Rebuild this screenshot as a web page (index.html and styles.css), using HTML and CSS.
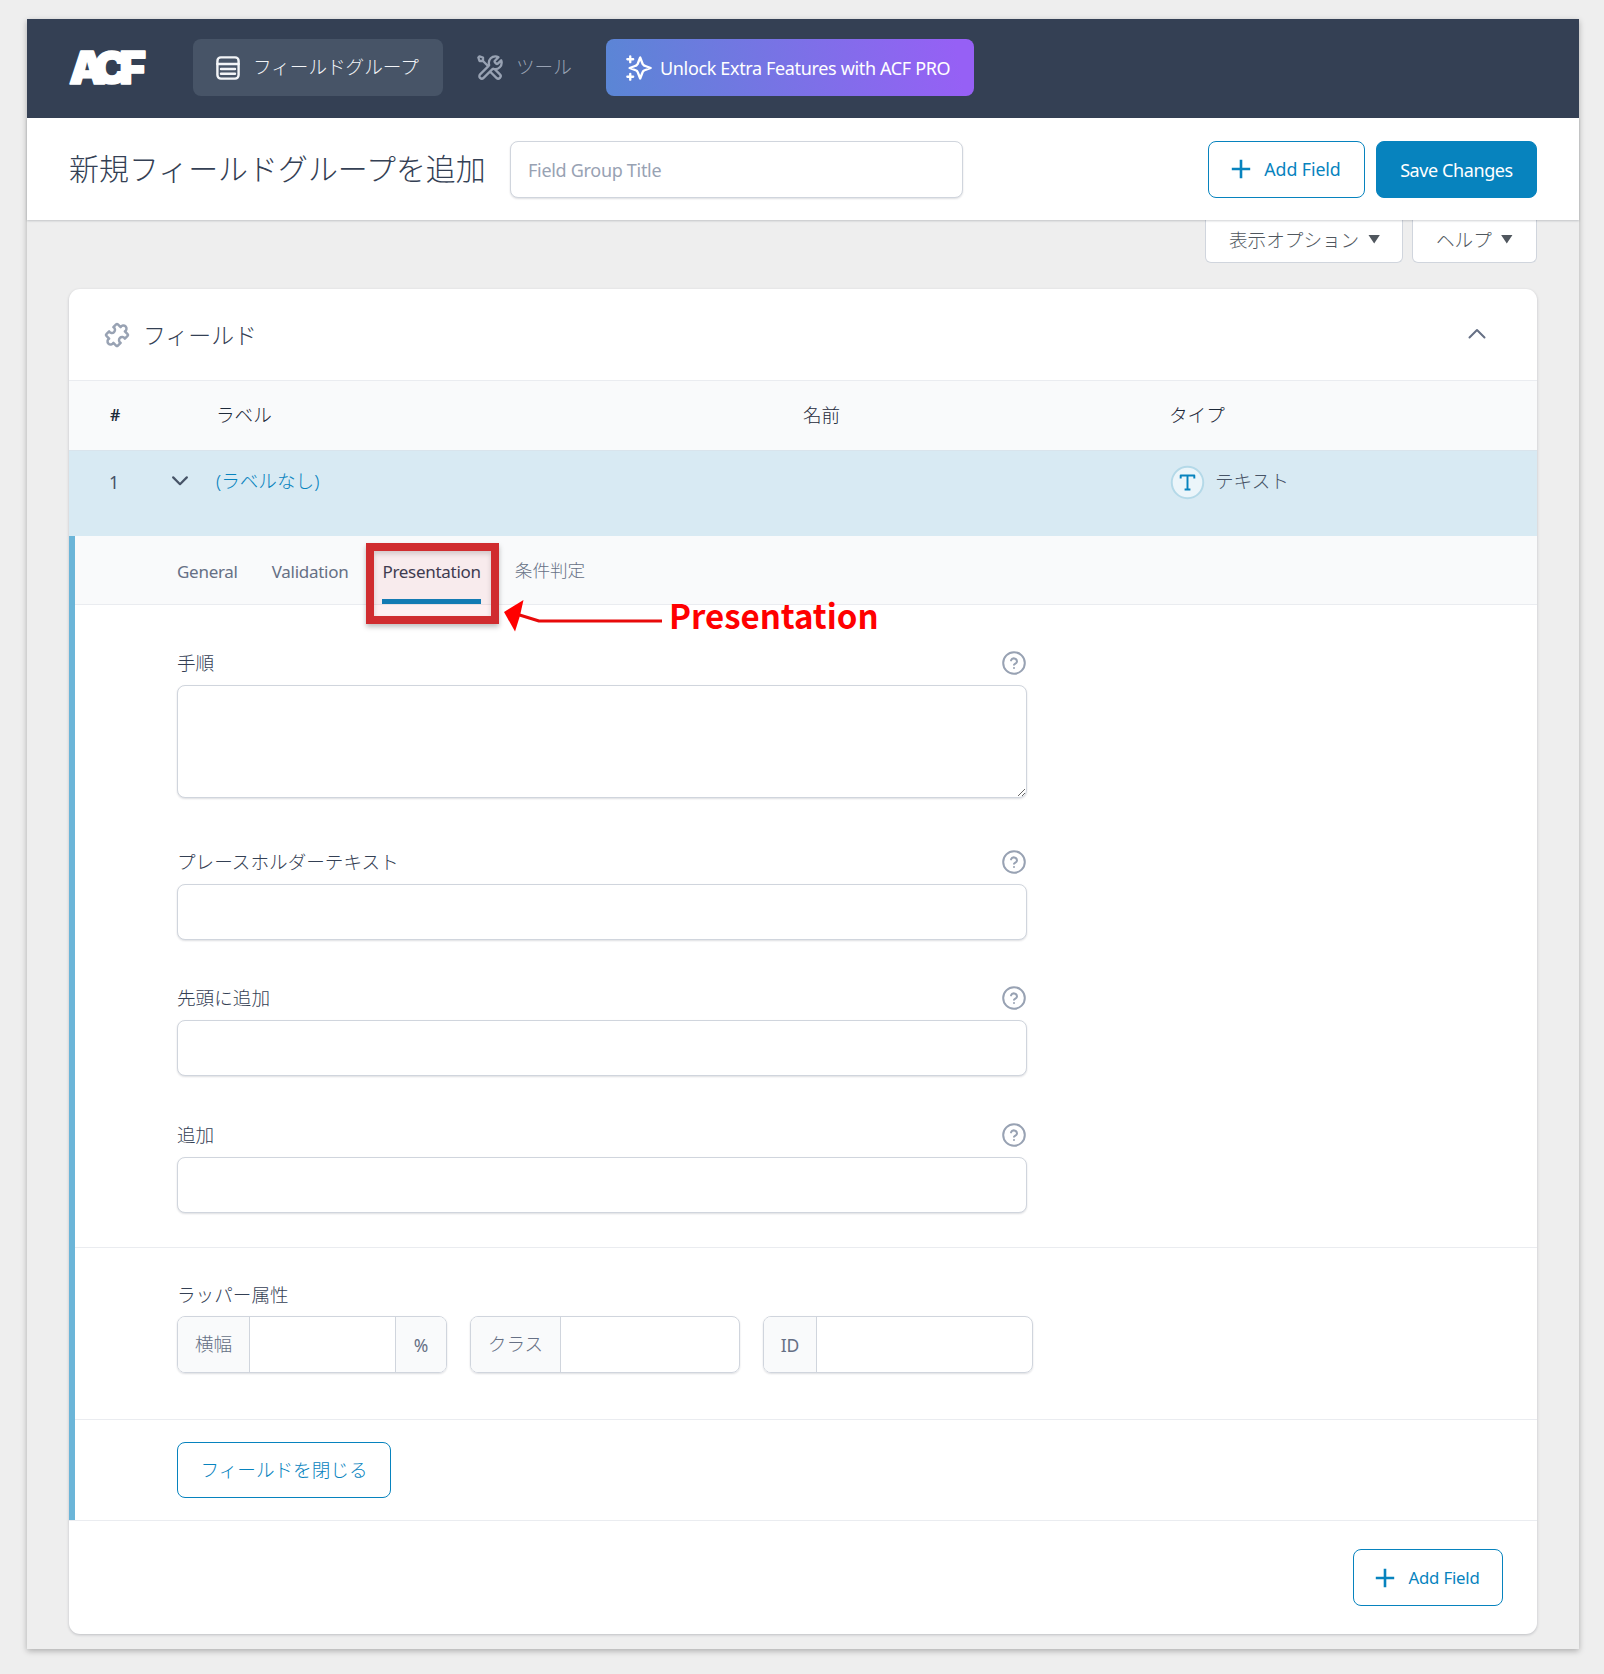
FILE: index.html
```html
<!DOCTYPE html>
<html lang="ja">
<head>
<meta charset="utf-8">
<title>新規フィールドグループを追加</title>
<link rel="stylesheet" href="styles.css">
</head>
<body>
<svg width="0" height="0" class="defs">
  <symbol id="help" viewBox="0 0 24 24"><circle cx="12" cy="12" r="10.8"/><path d="M9 9.4a3.1 3.1 0 0 1 6 1c0 2-3 2.6-3 3.4M12 16.9v.1"/></symbol>
  <symbol id="plus" viewBox="0 0 20 20"><path d="M10 .8v18.4M.8 10h18.4"/></symbol>
</svg>
<div class="frame">
  <header class="topbar">
    <svg class="logo" viewBox="0 0 90 60"><text x="5" y="45" textLength="77" lengthAdjust="spacing">ACF</text></svg>
    <nav class="nav">
      <a class="nav-item active">
        <svg class="i-list" viewBox="0 0 24 24"><rect x="1.4" y="1.4" width="21.2" height="21.2" rx="3.5"/><path d="M1.4 8h21.2M5 13h14M5 17.7h14"/></svg>
        <span>フィールドグループ</span>
      </a>
      <a class="nav-item tools">
        <svg class="i-tools" viewBox="0 0 24 24"><path d="M6 6L10.5 10.5M6 6H3L2 3L3 2L6 3V6ZM19.259 2.741L16.6314 5.36863C16.2354 5.76465 16.0373 5.96265 15.9632 6.19098C15.8979 6.39183 15.8979 6.60817 15.9632 6.80902C16.0373 7.03735 16.2354 7.23535 16.6314 7.63137L16.8686 7.86863C17.2646 8.26465 17.4627 8.46265 17.691 8.53684C17.8918 8.6021 18.1082 8.6021 18.309 8.53684C18.5373 8.46265 18.7354 8.26465 19.1314 7.86863L21.5893 5.41072C21.854 6.05488 22 6.76039 22 7.5C22 10.5376 19.5376 13 16.5 13C16.1338 13 15.7759 12.9642 15.4298 12.8959C14.9436 12.8001 14.7005 12.7521 14.5532 12.7668C14.3965 12.7824 14.3193 12.8059 14.1805 12.8802C14.0499 12.9501 13.919 13.081 13.657 13.343L6.5 20.5C5.67157 21.3284 4.32843 21.3284 3.5 20.5C2.67157 19.6716 2.67157 18.3284 3.5 17.5L10.657 10.343C10.919 10.081 11.0499 9.95005 11.1198 9.81949C11.1941 9.68068 11.2176 9.60347 11.2332 9.44681C11.2479 9.29945 11.1999 9.05638 11.1041 8.57024C11.0358 8.22406 11 7.86621 11 7.5C11 4.46243 13.4624 2 16.5 2C17.5055 2 18.448 2.26982 19.259 2.741ZM12 15L17.5 20.5C18.3284 21.3283 19.6715 21.3283 20.5 20.5C21.3284 19.6715 21.3284 18.3283 20.5 17.5L15.9753 12.9753C15.655 12.945 15.3427 12.8872 15.0408 12.8043C14.6517 12.6975 14.2249 12.7751 13.9397 13.0603L12 15Z"/></svg>
        <span>ツール</span>
      </a>
    </nav>
    <a class="pro">
      <svg class="i-stars" viewBox="0 0 24 24"><path d="M4.5 22V17M4.5 7V2M2 4.5H7M2 19.5H7M13 3L11.266 7.509C10.984 8.242 10.843 8.609 10.624 8.917C10.429 9.19 10.19 9.429 9.917 9.624C9.609 9.843 9.242 9.984 8.509 10.266L4 12L8.509 13.734C9.242 14.016 9.609 14.157 9.917 14.376C10.19 14.571 10.429 14.81 10.624 15.083C10.843 15.391 10.984 15.758 11.266 16.491L13 21L14.734 16.491C15.016 15.758 15.157 15.391 15.376 15.083C15.571 14.81 15.81 14.571 16.083 14.376C16.391 14.157 16.758 14.016 17.491 13.734L22 12L17.491 10.266C16.758 9.984 16.391 9.843 16.083 9.624C15.81 9.429 15.571 9.19 15.376 8.917C15.157 8.609 15.016 8.242 14.734 7.509Z"/></svg>
      <span>Unlock Extra Features with ACF PRO</span>
    </a>
  </header>

  <div class="titlebar">
    <h1>新規フィールドグループを追加</h1>
    <input class="title-input" type="text" placeholder="Field Group Title">
    <div class="actions">
      <button class="btn add"><svg class="i-plus"><use href="#plus"/></svg><span>Add Field</span></button>
      <button class="btn save">Save Changes</button>
    </div>
  </div>

  <div class="screen-meta">
    <div class="meta-tab options"><span>表示オプション</span><i></i></div>
    <div class="meta-tab helptab"><span>ヘルプ</span><i></i></div>
  </div>

  <main class="card">
    <div class="card-head">
      <svg class="i-puzzle" viewBox="0 0 24 24"><path transform="rotate(45 12 12)" d="M6.500 5.500H9.600a2.500 2.500 0 1 1 4.800 0H17.500a1 1 0 0 1 1 1V9.600a2.500 2.500 0 1 0 0 4.800V17.500a1 1 0 0 1-1 1H14.400a2.500 2.500 0 1 1-4.800 0H6.500a1 1 0 0 1-1-1V14.400a2.500 2.500 0 1 0 0-4.800V6.500a1 1 0 0 1 1-1z"/></svg>
      <h2>フィールド</h2>
      <svg class="i-up" viewBox="0 0 18 11"><path d="M1.5 9.5L9 2l7.500 7.500"/></svg>
    </div>
    <div class="grid thead">
      <b>#</b><span></span><span>ラベル</span><span>名前</span><span>タイプ</span>
    </div>
    <div class="grid trow">
      <span class="num">1</span>
      <svg class="i-down" viewBox="0 0 16 10"><path d="M1.200 1.400L8 8.200l6.800-6.800"/></svg>
      <a>(ラベルなし)</a>
      <span></span>
      <span class="type"><svg class="i-type" viewBox="0 0 36 36"><circle cx="18" cy="18" r="16.200"/><path d="M11 14v-3.200h14V14M18 10.800v14.400M15 25.200h6"/></svg><span>テキスト</span></span>
    </div>
    <div class="field">
      <div class="tabs">
        <a>General</a><a>Validation</a>
        <a class="current">Presentation<span class="mark"></span></a>
        <a>条件判定</a>
        <div class="callout">
          <svg viewBox="0 0 160 34"><path class="line" d="M14 14.500L35 21h123"/><path class="head" d="M0 12L19.500 0L16 15.500L11 31.500z"/></svg>
          <strong>Presentation</strong>
        </div>
      </div>
      <div class="settings">
        <div class="setting"><div class="lab"><label>手順</label><svg class="i-help"><use href="#help"/></svg></div><textarea></textarea></div>
        <div class="setting"><div class="lab"><label>プレースホルダーテキスト</label><svg class="i-help"><use href="#help"/></svg></div><input type="text"></div>
        <div class="setting"><div class="lab"><label>先頭に追加</label><svg class="i-help"><use href="#help"/></svg></div><input type="text"></div>
        <div class="setting"><div class="lab"><label>追加</label><svg class="i-help"><use href="#help"/></svg></div><input type="text"></div>
      </div>
      <div class="wrapper">
        <div class="lab"><label>ラッパー属性</label></div>
        <div class="groups">
          <div class="group"><span class="pre w1">横幅</span><span class="val"></span><span class="post">%</span></div>
          <div class="group"><span class="pre w2">クラス</span><span class="val"></span></div>
          <div class="group"><span class="pre w3">ID</span><span class="val"></span></div>
        </div>
      </div>
      <div class="close-row"><button class="btn close">フィールドを閉じる</button></div>
    </div>
    <div class="card-foot">
      <button class="btn add small"><svg class="i-plus"><use href="#plus"/></svg><span>Add Field</span></button>
    </div>
  </main>
</div>
</body>
</html>
```

FILE: styles.css
```css
* { box-sizing: border-box; }
body {
  margin: 0;
  padding: 19px 25px 25px 27px;
  height: 1674px;
  overflow: hidden;
  background: #eee;
  color: #344054;
  font: 300 18.6px/28px "Noto Sans", "Noto Sans CJK JP", sans-serif;
}
svg { flex: none; fill: none; stroke: currentColor; stroke-linecap: round; stroke-linejoin: round; }
.defs { position: absolute; }
input, textarea, button { font: inherit; color: inherit; }
.frame { height: 1630px; background: #eee; box-shadow: 0 2px 6px rgba(0,0,0,.28); }

.topbar { height: 99px; background: #344054; display: flex; align-items: flex-start; padding: 20px 0 0 37px; }
.logo { width: 90px; height: 60px; margin: 0 39px 0 0; }
.logo text { font: 900 46px Inter, sans-serif; fill: #fff; stroke: #fff; stroke-width: 1.5; }
.nav { display: flex; }
.nav-item { height: 57px; display: flex; align-items: center; border-radius: 8px; }
.nav-item.active { width: 250px; padding-left: 23px; gap: 13px; background: #475467; color: #f2f4f7; }
.nav-item.tools { width: 163px; padding-left: 33px; gap: 12px; color: #98a2b3; }
.nav-item span { margin-bottom: 1px; }
.i-list { width: 24px; height: 24px; stroke-width: 2.4; }
.i-tools { width: 28px; height: 28px; stroke-width: 2; }
.pro {
  width: 368px; height: 57px; padding-left: 19px; display: flex; align-items: center; gap: 7px;
  border-radius: 8px; background: linear-gradient(80deg, #5a86d5, #9660f5 95%);
  color: #fff; font-size: 18px; font-weight: 400; letter-spacing: -.35px; white-space: nowrap;
}
.i-stars { width: 28px; height: 28px; stroke-width: 2; }

.titlebar {
  position: relative; z-index: 1; height: 102px; padding: 0 42px; display: flex; align-items: center;
  background: #fff; box-shadow: 0 1px 2px rgba(16,24,40,.2);
}
h1 { margin: 0; width: 441px; font-size: 29.950px; font-weight: 300; line-height: 40px; white-space: nowrap; }
input, textarea {
  display: block; width: 100%; height: 57px; margin: 0; padding: 0 18px; background: #fff;
  border: 1.5px solid #d0d5dd; border-radius: 8px; box-shadow: 0 1px 2px rgba(16,24,40,.14); outline: none;
}
.title-input { width: 453px; padding: 2px 17px 0; font-size: 18px; font-weight: 400; letter-spacing: -.3px; }
.title-input::placeholder { color: #98a2b3; opacity: 1; }
.actions { margin-left: auto; display: flex; gap: 11px; }
.btn {
  height: 57px; padding: 0; display: flex; align-items: center; justify-content: center; white-space: nowrap;
  border: 1.500px solid #0783be; border-radius: 8px; background: #fff; color: #0783be;
}
.btn.add { width: 157px; gap: 13px; padding-right: 1px; font-size: 17.800px; font-weight: 400; letter-spacing: -.1px; }
.btn.save { width: 161px; padding-top: 2px; background: #0783be; color: #fff; font-size: 18px; font-weight: 400; letter-spacing: -.4px; }
.i-plus { width: 20px; height: 20px; stroke-width: 2.600; stroke-linecap: butt; }

.screen-meta { height: 69px; padding-right: 42px; display: flex; justify-content: flex-end; gap: 9px; }
.meta-tab {
  height: 43px; display: flex; align-items: center; gap: 9px; padding: 0 0 2px 23px; background: #fff;
  border: 1.500px solid #d0d5dd; border-top: 0; border-radius: 0 0 6px 6px; color: #50575e;
}
.meta-tab i { width: 12px; height: 9px; margin-bottom: 2px; background: #50575e; clip-path: polygon(0 0, 100% 0, 50% 100%); }
.options { width: 198px; }
.helptab { width: 125px; }

.card { width: 1468px; height: 1345px; margin-left: 42px; background: #fff; border-radius: 11px; box-shadow: 0 1px 3px rgba(16,24,40,.22); }
.card-head { height: 92px; padding: 0 51px 0 34px; display: flex; align-items: center; border-bottom: 1.500px solid #eaecf0; }
.i-puzzle { width: 30px; height: 30px; margin: 0 11px 0 -1px; color: #98a2b3; stroke-width: 2; }
h2 { margin: 2px auto 0 0; font-size: 22.900px; font-weight: 300; }
.i-up { width: 18px; height: 11px; margin-bottom: 2px; stroke-width: 2; color: #667085; }
.grid { display: grid; grid-template-columns: 62px 44px 587px 366px 1fr; padding-left: 41px; }
.thead { height: 69px; padding-bottom: 2px; align-items: center; background: #f9fafb; color: #1d2939; }
.thead b { font-size: 16px; font-weight: 600; }
.trow { height: 86px; padding-top: 14px; align-items: start; background: #d8eaf3; border-top: 1px solid #d9e4ec; color: #475467; }
.trow > * { height: 34px; display: flex; align-items: center; }
.trow .num { margin-left: -1px; font-weight: 400; font-size: 17.500px; }
.trow .i-down { width: 16px; height: 10px; margin: 11px 0 0; stroke-width: 2.200; }
.trow a { height: 32px; color: #0783be; }
.type { gap: 10px; }
.type span { margin-bottom: 2px; }
.i-type { width: 35px; height: 35px; margin-left: 1px; color: #0783be; stroke-width: 2; stroke-linecap: butt; }
.i-type circle { fill: #ebf5fa; stroke: #b4d9e8; }

.field { height: 984px; border-left: 6px solid #6bb5d8; }
.tabs { position: relative; height: 69px; padding-left: 102px; display: flex; gap: 34px; background: #f9fafb; border-bottom: 1.500px solid #eaecf0; color: #667085; }
.tabs a { position: relative; height: 68px; line-height: 71px; font-size: 17px; font-weight: 400; letter-spacing: -.28px; white-space: nowrap; }
.tabs a:last-of-type { line-height: 69px; font-size: 17.600px; font-weight: 300; letter-spacing: 0; }
.tabs .current { color: #344054; border-bottom: 5px solid #0783be; }
.mark { position: absolute; left: -16px; top: 7px; width: 133px; height: 81px; border: 8px solid #d02c2f; background: rgba(230,0,20,.06); box-shadow: 0 3px 5px rgba(0,0,0,.25), inset 0 3px 5px rgba(0,0,0,.15); }
.callout { position: absolute; left: 429px; top: 64px; display: flex; }
.callout svg { width: 160px; height: 34px; stroke-linecap: butt; }
.line { stroke: #e80a0a; stroke-width: 3; }
.head { fill: #f00; stroke: none; }
.callout strong { margin: -5px 0 0 5px; font: 700 33px/40px "Noto Sans CJK JP", sans-serif; color: #f00; }

.settings { height: 643px; padding: 44px 0 0 102px; border-bottom: 1.500px solid #eaecf0; }
.setting { width: 850px; height: 92px; margin-bottom: 44.400px; }
.setting:first-child { height: 149px; margin-bottom: 50px; }
.lab { height: 36px; display: flex; justify-content: space-between; align-items: flex-start; }
.lab label { line-height: 28px; }
.i-help { width: 24px; height: 24px; margin: 2px 1px 0 0; color: #98a2b3; stroke-width: 2; }
.setting input { height: 56px; }
.setting textarea { height: 113px; resize: vertical; }
.wrapper { height: 172px; padding: 33px 0 0 102px; border-bottom: 1.500px solid #eaecf0; }
.wrapper .lab { height: 35px; }
.groups { display: flex; gap: 23px; color: #667085; }
.group { width: 270px; height: 57px; display: flex; overflow: hidden; border: 1.500px solid #d0d5dd; border-radius: 8px; box-shadow: 0 1px 2px rgba(16,24,40,.14); }
.pre, .post { display: flex; align-items: center; justify-content: center; background: #f9fafb; }
.pre { padding-bottom: 2px; border-right: 1px solid #d0d5dd; }
.w1 { width: 72px; } .w2 { width: 90px; } .w3 { width: 53px; }
.w3, .post { padding: 1px 0 0; font-size: 17.500px; font-weight: 400; }
.val { flex: 1; }
.post { width: 51px; border-left: 1px solid #d0d5dd; }
.close-row { padding: 22px 0 0 102px; }
.btn.close { width: 214px; height: 56px; padding-bottom: 1px; font-weight: 300; }
.card-foot { height: 113px; padding: 28px 34px 0 0; display: flex; justify-content: flex-end; border-top: 1.500px solid #eaecf0; }
.btn.small { width: 150px; padding-top: 1px; font-size: 16.800px; letter-spacing: -.2px; }
```
